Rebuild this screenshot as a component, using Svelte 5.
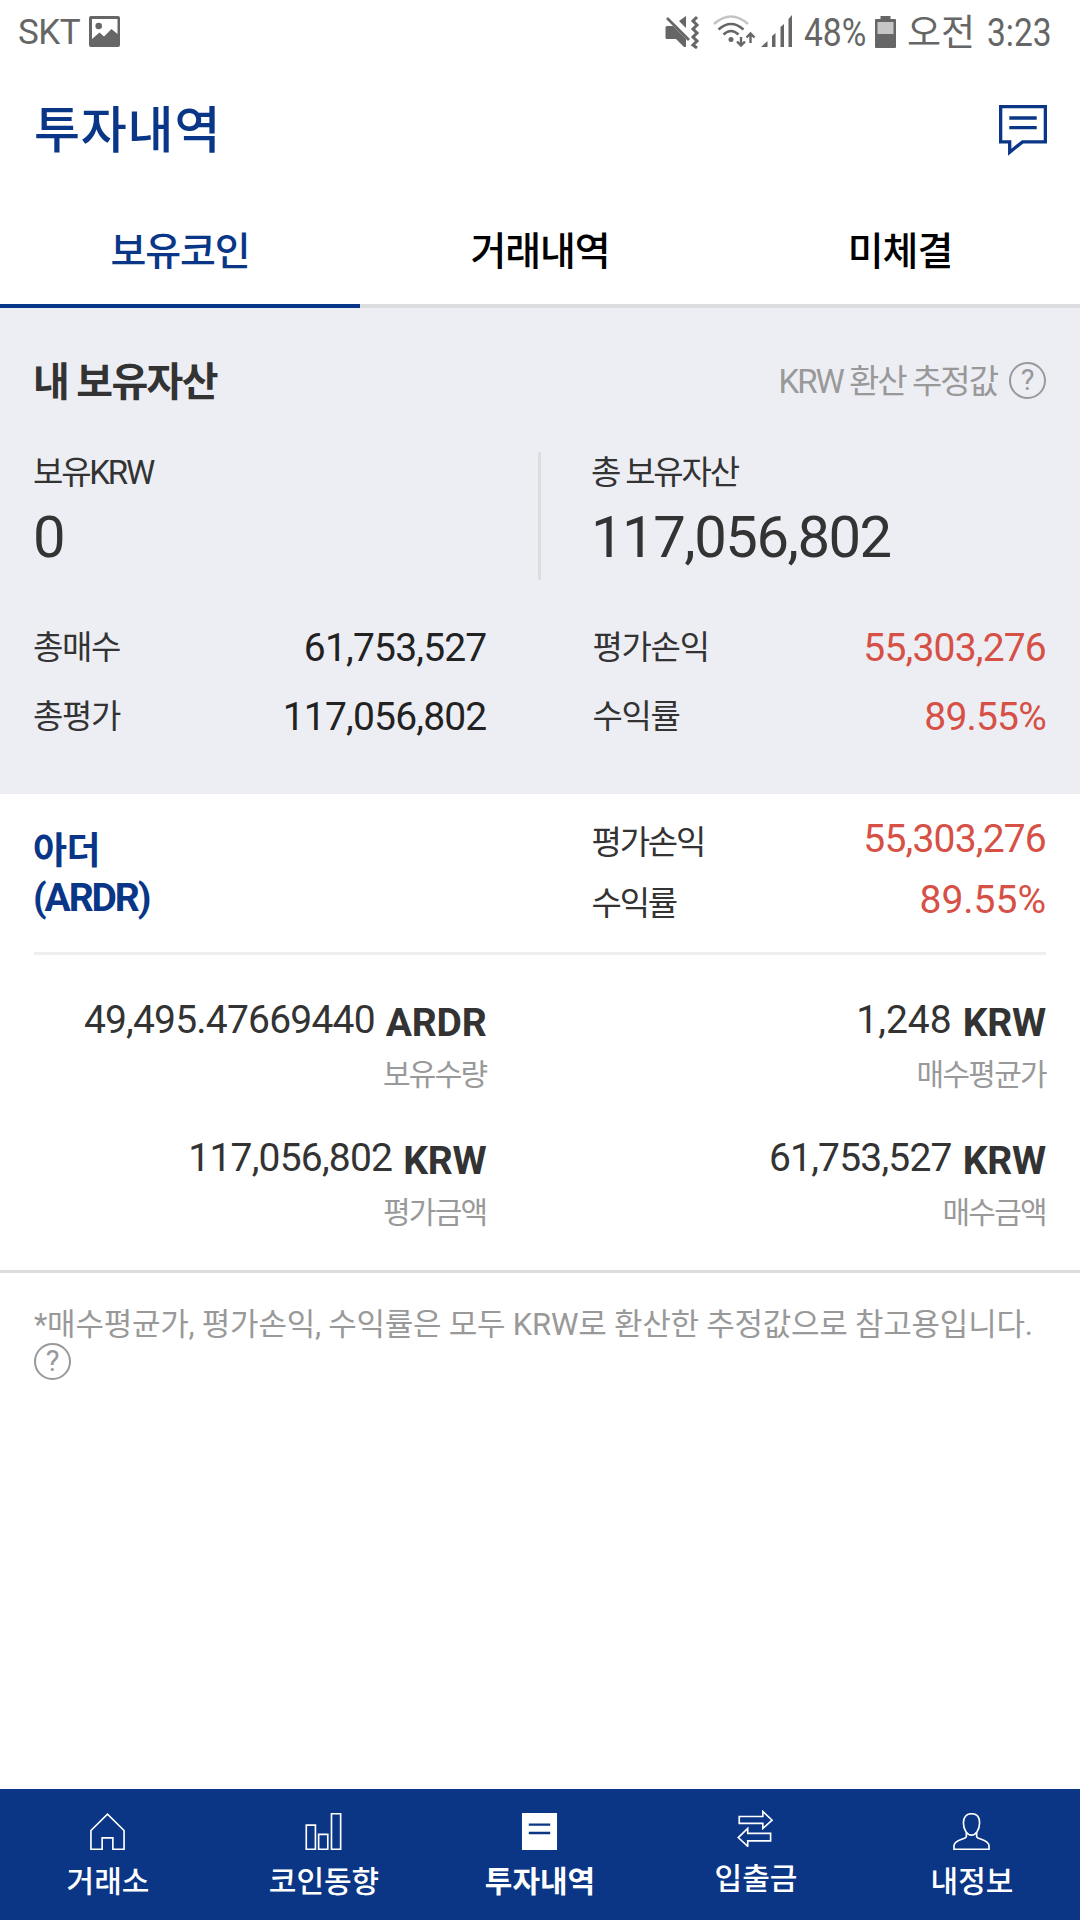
<script lang="ts">
	interface Row {
		label: string;
		value: string;
		up?: boolean;
	}

	interface Cell {
		value: string;
		unit: string;
		label: string;
		wide?: boolean;
	}

	const tabs: string[] = ['보유코인', '거래내역', '미체결'];
	const navItems: { icon: string; label: string }[] = [
		{ icon: 'home', label: '거래소' },
		{ icon: 'chart', label: '코인동향' },
		{ icon: 'list', label: '투자내역' },
		{ icon: 'transfer', label: '입출금' },
		{ icon: 'user', label: '내정보' }
	];

	const totals: Row[] = [
		{ label: '총매수', value: '61,753,527' },
		{ label: '평가손익', value: '55,303,276', up: true },
		{ label: '총평가', value: '117,056,802' },
		{ label: '수익률', value: '89.55%', up: true }
	];

	const cells: Cell[] = [
		{ value: '49,495.47669440', unit: 'ARDR', label: '보유수량' },
		{ value: '1,248', unit: 'KRW', label: '매수평균가', wide: true },
		{ value: '117,056,802', unit: 'KRW', label: '평가금액' },
		{ value: '61,753,527', unit: 'KRW', label: '매수금액' }
	];

	let activeTab = $state<number>(0);
	let activeNav = $state<string>('list');
</script>

{#snippet help()}
	<span class="help">?</span>
{/snippet}

<div class="app">
	<div class="status">
		<span class="carrier">SKT</span>
		<svg class="photo" width="31" height="31" viewBox="0 0 31 31">
			<path fill-rule="evenodd" d="M2 0h27a2 2 0 0 1 2 2v27a2 2 0 0 1-2 2H2a2 2 0 0 1-2-2V2a2 2 0 0 1 2-2zM3 3v20l7.500-6.500 4.500 4 7.500-7.500 6 5V3z" />
			<circle cx="9.700" cy="10" r="3.300" />
		</svg>
		<svg class="indicators" width="130" height="34" viewBox="0 0 130 34">
			<!-- muted, vibrating -->
			<path d="M2 11h9l3 3 7 7v11h-2l-8-8H2q-1.500 0-1.500-1.500v-10Q.500 11 2 11zM14 6l7-5v12z" />
			<path d="M3 3l22 22" fill="none" stroke="#fff" stroke-width="4" />
			<path d="M2 3l22 22" fill="none" stroke="#666" stroke-width="2.600" />
			<path d="M32 2l-4 4 4 4-4 4 4 4-4 4 4 4-4 4 4 3" fill="none" stroke="#666" stroke-width="3" />
			<!-- wifi -->
			<path d="M49 9Q66-6 83 9" fill="none" stroke="#c4c4c4" stroke-width="2.600" />
			<path d="M53.500 14.500Q66 3.500 78.500 14.500M58.500 19.500Q66 12.500 73.500 19.500" fill="none" stroke="#666" stroke-width="2.600" />
			<circle cx="66" cy="24.500" r="2.500" />
			<path d="M76 22v8M72 26.500l4 4 4-4M85.500 28v-9M81.500 22.500l4-4 4 4" fill="none" stroke="#666" stroke-width="2.400" />
			<!-- signal -->
			<path d="M96 32l6.500-6v6zM107 21l3.500-3v14H107zM115.500 12l3.500-3v23h-3.500zM123.500 4l3.500-4v32h-3.500z" />
		</svg>
		<span class="battery-level">48%</span>
		<svg class="battery" width="21" height="32" viewBox="0 0 21 32">
			<path d="M5.500 0h10v3H20q1 0 1 1v27q0 1-1 1H1q-1 0-1-1V4q0-1 1-1h4.500z" />
			<rect x="2.500" y="6" width="16" height="12" fill="#c6c6c6" />
		</svg>
		<span class="ampm">오전</span>
		<span class="clock">3:23</span>
	</div>

	<header>
		<h1>투자내역</h1>
		<svg width="48" height="51" viewBox="0 0 48 51" fill="none" stroke="#0a3688" stroke-width="3.300">
			<path d="M1.650 1.650h44.700v35.200H23.500L10.700 47.200V36.850H1.650z" />
			<path d="M10.300 13h27.400M10.300 22.700h27.400" />
		</svg>
	</header>

	<div class="tabs">
		{#each tabs as tab, i}
			<button class="tab" class:active={activeTab === i} onclick={() => (activeTab = i)}>{tab}</button>
		{/each}
	</div>

	<section class="assets">
		<div class="assets-head">
			<h2>내 보유자산</h2>
			<span class="basis">KRW 환산 추정값</span>
			{@render help()}
		</div>
		<div class="balances">
			<div class="balance">
				<p class="label tight">보유KRW</p>
				<p class="big">0</p>
			</div>
			<div class="balance">
				<p class="label tight">총 보유자산</p>
				<p class="big">117,056,802</p>
			</div>
		</div>
		<div class="totals">
			{#each totals as row}
				<div class="row">
					<span class="label">{row.label}</span>
					<span class="num" class:up={row.up}>{row.value}</span>
				</div>
			{/each}
		</div>
	</section>

	<section class="coin">
		<div class="coin-head">
			<h3><span>아더</span><br />(ARDR)</h3>
			<div class="coin-rows">
				<div class="row">
					<span class="label tight">평가손익</span>
					<span class="num up">55,303,276</span>
				</div>
				<div class="row">
					<span class="label tight">수익률</span>
					<span class="num up wide">89.55%</span>
				</div>
			</div>
		</div>
		<div class="cells">
			{#each cells as cell}
				<div class="cell">
					<div class="amount">
						<span class="num" class:wide={cell.wide}>{cell.value}</span>
						<b>{cell.unit}</b>
					</div>
					<span class="caption">{cell.label}</span>
				</div>
			{/each}
		</div>
	</section>

	<div class="note">
		<p>*매수평균가, 평가손익, 수익률은 모두 KRW로 환산한 추정값으로 참고용입니다.</p>
		{@render help()}
	</div>

	<nav>
		{#each navItems as item}
			<button class="nav-item {item.icon}" class:active={activeNav === item.icon} onclick={() => (activeNav = item.icon)}>
				<svg width="37" height="37" viewBox="0 0 38 38" fill="none" stroke="#fff" stroke-width="1.700">
					{#if item.icon === 'home'}
						<path d="M2 37.200V18L19 1.200 36 18v19.200H24.500V25.500H13.500v11.700z" />
					{:else if item.icon === 'chart'}
						<path d="M1.300 12.500h9.400v24.700H1.300zM14 22h9.400v15.200H14zM27.200.800h9.400v36.400h-9.400z" />
					{:else if item.icon === 'list'}
						<path d="M1 0h36v38h-36z" fill="#fff" stroke="none" />
						<path d="M8 12h22M8 20.500h22" stroke="#0a3685" stroke-width="2.400" />
					{:else if item.icon === 'transfer'}
						<path d="M2.300 6.700h24.200V1.500l9.500 9-9.500 8.500v-5.200H2.300zM34.500 24H11v-5l-9.700 9.300 9.700 9v-5.600h23.500z" />
					{:else}
						<path d="M19 .800c5.500 0 8.300 3.500 8.300 9.200 0 7.500-4 12.700-8.300 12.700S10.700 17.500 10.700 10C10.700 4.300 13.500.800 19 .800z" />
						<path d="M13.700 20v4.500c-1.500 3-12.700 2.700-12.700 9.500v3.200h36V34c0-6.800-11.200-6.500-12.700-9.500V20" />
					{/if}
				</svg>
				<span>{item.label}</span>
			</button>
		{/each}
	</nav>
</div>

<style>
	:global(body) { background: #fff; }
	.app { width: 1080px; height: 1920px; display: flex; flex-direction: column; overflow: hidden; color: #333; font-family: Roboto, "Noto Sans CJK KR", sans-serif; line-height: 1.2; }
	h1, h2, h3, p { margin: 0; font-weight: 400; }
	button { border: 0; padding: 0; background: none; font-family: inherit; line-height: inherit; cursor: pointer; }
	svg { display: block; flex: none; }

	.status { height: 64px; box-sizing: border-box; padding: 0 20px 0 18px; display: flex; align-items: center; color: #666; fill: #666; white-space: nowrap; }
	.carrier { width: 71px; padding-top: 1px; font-size: 35px; letter-spacing: -0.500px; }
	.photo { margin-bottom: 2px; }
	.indicators { margin-left: 545px; }
	.battery-level { width: 63px; padding-top: 3px; margin-left: 9px; font-size: 39px; transform: scaleX(0.86); transform-origin: left; }
	.battery { margin-left: 8px; }
	.ampm { width: 74px; padding-top: 5px; margin-left: 11px; font-size: 37px; }
	.clock { width: 66px; padding-top: 3px; margin-left: 6px; font-size: 39px; transform: scaleX(0.86); transform-origin: left; }

	header { height: 130px; box-sizing: border-box; padding: 0 33px 0 34px; display: flex; align-items: center; justify-content: space-between; }
	header svg { margin-top: 2px; }
	h1 { padding-top: 3px; font-size: 50px; font-weight: 500; letter-spacing: 0.800px; color: #0a3688; }

	.tabs { height: 114px; display: flex; }
	.tab { flex: 1; padding-top: 7px; border-bottom: 4px solid #dcdddf; font-size: 39px; font-weight: 500; letter-spacing: -1.100px; color: #000; }
	.tab.active { border-color: #073688; color: #0a3688; }

	.assets { height: 486px; box-sizing: border-box; padding: 35px 34px 0; background: #edeef4; }
	.assets-head { height: 74px; display: flex; align-items: center; }
	h2 { flex: 1; margin-left: -1px; padding-top: 6px; font-size: 40px; font-weight: 700; letter-spacing: -1.700px; }
	.basis { padding-top: 4px; margin-right: 12px; font-size: 33px; letter-spacing: -2px; color: #999; }
	.help { width: 37px; height: 37px; box-sizing: border-box; display: flex; align-items: center; justify-content: center; border: 2px solid #999; border-radius: 50%; font-size: 29px; line-height: 1; color: #999; }

	.balances { height: 128px; margin-top: 35px; display: grid; grid-template-columns: 507px 1fr; }
	.balance + .balance { padding-left: 51px; }
	.balance:first-child { border-right: 3px solid #dcdddf; box-sizing: border-box; }
	.label { margin-left: -1px; font-size: 33px; line-height: 42px; letter-spacing: -1.300px; }
	.tight { letter-spacing: -2.200px; }
	.big { margin: 7px 0 0 -1px; font-size: 58px; line-height: 72px; letter-spacing: -1.500px; }

	.totals, .cells { display: grid; grid-template-columns: 1fr 1fr; column-gap: 107px; }
	.totals { margin-top: 33px; }
	.row { height: 69px; display: flex; align-items: center; justify-content: space-between; }
	.num { font-size: 39px; line-height: 54px; letter-spacing: -0.800px; }
	.num.wide { letter-spacing: 0; }
	.totals .num { color: #222; }
	.num.up, .totals .num.up { color: #d65046; }

	.coin { height: 479px; box-sizing: border-box; border-bottom: 3px solid #ddd; padding: 0 34px; }
	.coin-head { height: 161px; box-sizing: border-box; border-bottom: 3px solid #eee; display: grid; grid-template-columns: 1fr 1fr; column-gap: 105px; }
	h3 { margin-left: -1px; padding-top: 34px; font-size: 39px; line-height: 46px; font-weight: 700; letter-spacing: -2.100px; color: #0a3688; }
	h3 span { font-size: 37px; letter-spacing: -0.500px; }
	.coin-rows { padding-top: 14px; }
	.coin-rows .row { height: 61px; }
	.coin-rows .label { padding-top: 9px; }
	.cells { padding-top: 38px; }
	.cell { height: 138px; display: flex; flex-direction: column; align-items: flex-end; }
	.amount { display: flex; align-items: center; gap: 11px; }
	.amount b { padding-top: 6px; font-size: 39px; line-height: 48px; letter-spacing: -0.200px; }
	.caption { margin-top: 8px; font-size: 30px; line-height: 40px; letter-spacing: -1.700px; color: #999; }

	.note { flex: 1; padding: 33px 34px 0; color: #999; }
	.note p { font-size: 31px; line-height: 37px; letter-spacing: -0.240px; white-space: nowrap; }

	nav { height: 131px; display: flex; background: #0a3685; }
	.nav-item { flex: 1; padding-top: 24px; display: flex; flex-direction: column; align-items: center; font-size: 30px; line-height: 40px; font-weight: 500; color: #fff; }
	.nav-item svg { margin-right: 2px; }
	.nav-item span { margin-top: 12px; }
	.nav-item.active { font-weight: 700; }
	.nav-item.transfer { padding-top: 21px; }
</style>
